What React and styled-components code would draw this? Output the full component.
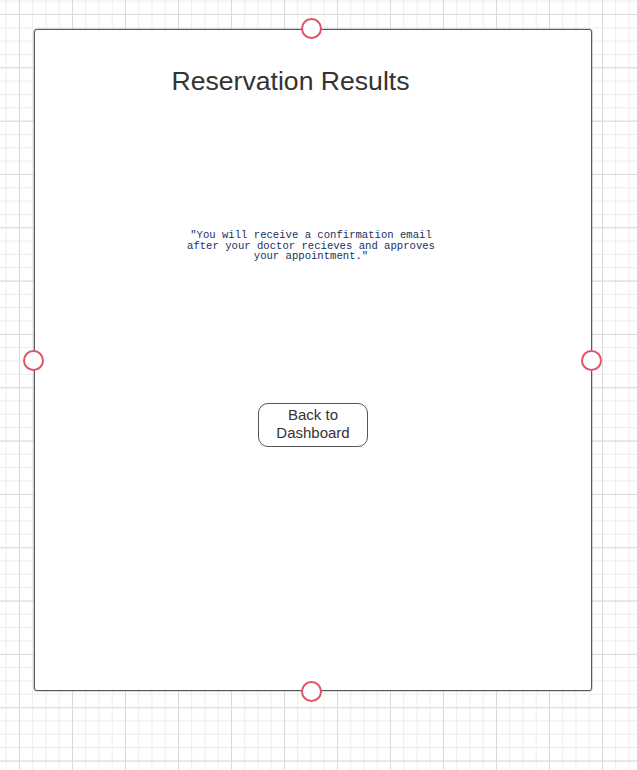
import styled, { createGlobalStyle } from "styled-components";

const GlobalStyle = createGlobalStyle`
  html, body {
    margin: 0;
    padding: 0;
  }
  body {
    font-family: "Liberation Sans", Arial, sans-serif;
  }
`;

function App() {
  return (
    <Page>
      <GlobalStyle />
      <Card>
        <Title>Reservation Results</Title>
        <Quote>
          "You will receive a confirmation email
          <br />
          after your doctor recieves and approves
          <br />
          your appointment."
        </Quote>
        <BackButton>
          Back to
          <br />
          Dashboard
        </BackButton>
        <Handle side="top" />
        <Handle side="left" />
        <Handle side="right" />
        <Handle side="bottom" />
      </Card>
    </Page>
  );
}

export default App;

const Page = styled.div`
  width: 637px;
  height: 770px;
  box-sizing: border-box;
  padding: 29px 0 0 34px;
  overflow: hidden;
  background-color: #ffffff;
  background-image: linear-gradient(to right, #dadada 1px, transparent 1px),
    linear-gradient(to bottom, #dadada 1px, transparent 1px),
    linear-gradient(to right, #ececec 1px, transparent 1px),
    linear-gradient(to bottom, #ececec 1px, transparent 1px);
  background-size: 53px 100%, 100% 53.33px, 13.25px 100%, 100% 13.33px;
  background-position: 19px 0, 0 14px, 5.75px 0, 0 0.67px;
`;

const Card = styled.div`
  position: relative;
  box-sizing: border-box;
  width: 558px;
  height: 662px;
  border: 1px solid #5a5a5a;
  box-shadow: 0 0 0 0.6px rgba(90, 90, 90, 0.45);
  border-radius: 3px;
  background: #ffffff;
  display: flex;
  flex-direction: column;
  align-items: center;
`;

const Title = styled.h1`
  margin: 36px 45px 0 0;
  font-size: 26.6px;
  line-height: 30px;
  font-weight: 400;
  color: #333333;
`;

const Quote = styled.p`
  margin: 134px 4px 0 0;
  font-family: "Liberation Mono", "Courier New", monospace;
  font-size: 10.6px;
  line-height: 10.6px;
  color: #1b2f5e;
  text-align: center;
`;

const BackButton = styled.button`
  margin-top: 141px;
  box-sizing: border-box;
  width: 110px;
  height: 44px;
  padding: 0 0 2px;
  border: 1px solid #555555;
  border-radius: 10px;
  background: #ffffff;
  font-family: "Liberation Sans", Arial, sans-serif;
  font-size: 15px;
  line-height: 18px;
  color: #333333;
  cursor: pointer;
`;

const handlePlaces = {
  top: "top: -12px; left: 266px;",
  bottom: "bottom: -12px; left: 266px;",
  left: "top: 320px; left: -12px;",
  right: "top: 320px; right: -11px;",
};

const Handle = styled.span`
  position: absolute;
  ${({ side }) => handlePlaces[side]}
  box-sizing: border-box;
  width: 21px;
  height: 21px;
  border: 2px solid #e05566;
  border-radius: 50%;
  background: #ffffff;
`;
